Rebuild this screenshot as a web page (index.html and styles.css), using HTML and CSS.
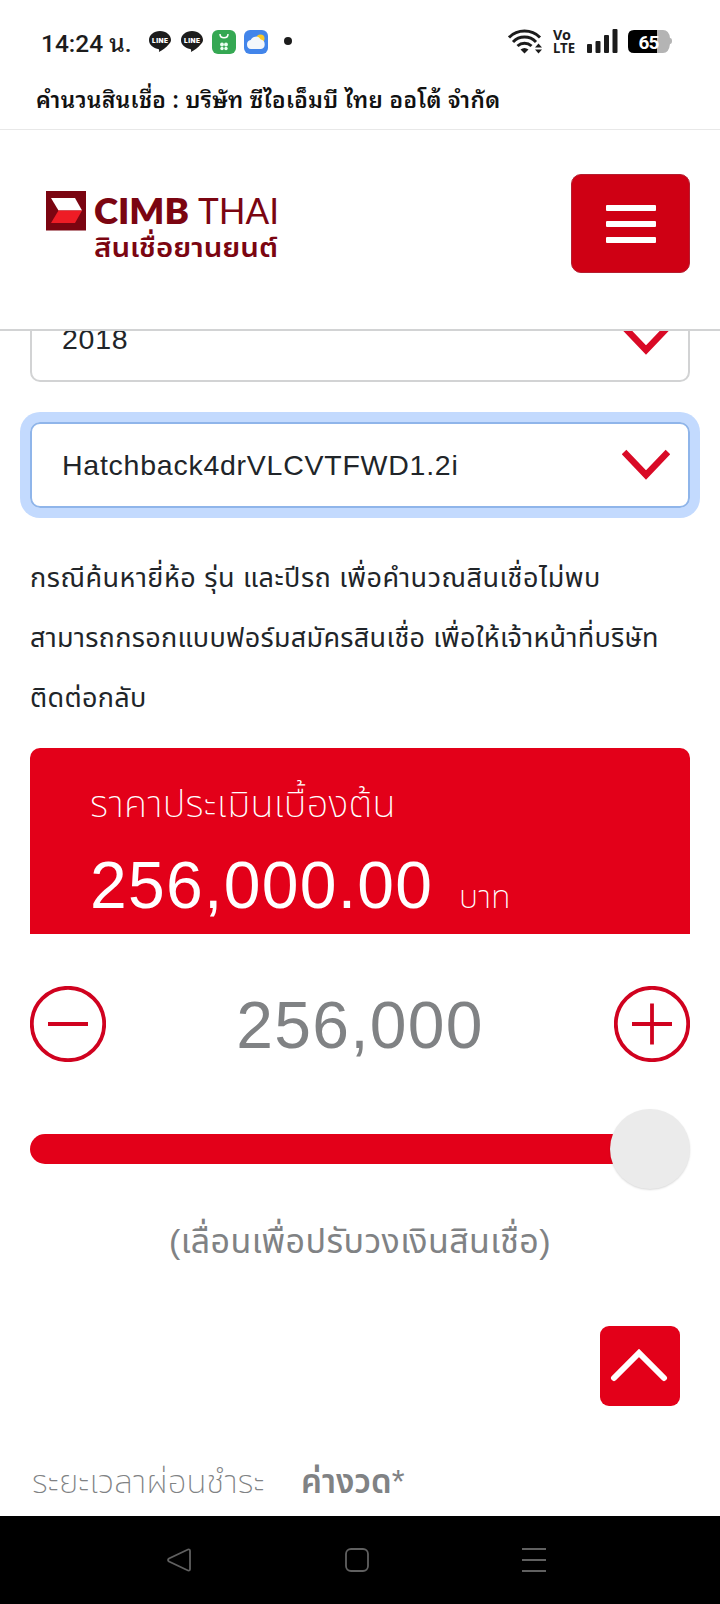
FILE: index.html
```
<!DOCTYPE html>
<html lang="th">
<head>
    <meta charset="UTF-8">
    <title>คำนวนสินเชื่อ : บริษัท ซีไอเอ็มบี ไทย ออโต้ จำกัด</title>
    <link rel="stylesheet" href="styles.css">
</head>
<body>

    <!-- Status bar -->
    <div class="status-bar">
        <span class="clock">14:24 น.</span>
        <svg class="notifications" width="150" height="32" viewBox="0 0 150 32">
            <g class="line-icon">
                <path d="M12 6C5.800 6 1 10 1 15c0 4.500 3.700 8 9 8.900 1.500.3 1.200 1.100.9 3.100 3.500-1.600 7.300-4.600 9.700-7.500C22.300 17.800 23 16.500 23 15c0-5-4.800-9-11-9z"/>
                <text x="4" y="17.500" textLength="16">LINE</text>
            </g>
            <g class="line-icon" transform="translate(32 0)">
                <path d="M12 6C5.800 6 1 10 1 15c0 4.500 3.700 8 9 8.900 1.500.3 1.200 1.100.9 3.100 3.500-1.600 7.300-4.600 9.700-7.500C22.300 17.800 23 16.500 23 15c0-5-4.800-9-11-9z"/>
                <text x="4" y="17.500" textLength="16">LINE</text>
            </g>
            <rect x="64" y="5" width="24" height="24" rx="6" fill="#35a853"/>
            <path d="M72 9c0 5 8 5 8 0" fill="none" stroke="#fff" stroke-width="1.500"/>
            <g fill="#e9fff0">
                <circle cx="74" cy="19.500" r="1.900"/><circle cx="78" cy="19.500" r="1.900"/>
                <circle cx="74" cy="23.500" r="1.700"/><circle cx="78" cy="23.500" r="1.700"/>
            </g>
            <rect x="96" y="5" width="24" height="24" rx="6" fill="#4285ea"/>
            <circle cx="112.500" cy="13.500" r="4" fill="#f9c928"/>
            <path d="M103 24a4.500 4.500 0 0 1-.3-8.900 5.500 5.500 0 0 1 10-.5 4.800 4.800 0 0 1 .3 9.400z" fill="#f4f7fb"/>
            <circle cx="140" cy="16" r="4" fill="#1c1c1c"/>
        </svg>
        <svg class="signals" width="166" height="32" viewBox="0 0 166 32">
            <g fill="none" stroke="#1c1c1c" stroke-width="3">
                <path d="M1 12.500a22 22 0 0 1 31 0"/>
                <path d="M5 17a16 16 0 0 1 23 0"/>
                <path d="M9.500 21a10.500 10.500 0 0 1 14 0"/>
            </g>
            <path d="M12.500 24.500q4-3 8 0l-4 4z" fill="#1c1c1c"/>
            <path d="M27 22.500l3.500-4 3.500 4zM27 24.500l3.500 4 3.500-4z" fill="#1c1c1c"/>
            <text class="volte" x="45" y="14.500" textLength="18" lengthAdjust="spacingAndGlyphs">Vo</text>
            <text class="volte" x="45" y="28" textLength="22" lengthAdjust="spacingAndGlyphs">LTE</text>
            <g fill="#1c1c1c">
                <rect x="79" y="19" width="5" height="9" rx="1"/>
                <rect x="87.500" y="16" width="5" height="12" rx="1"/>
                <rect x="96" y="10" width="5" height="18" rx="1"/>
                <rect x="104.500" y="4" width="5" height="24" rx="1"/>
            </g>
            <path d="M149 5h6q6 0 7 8 2 0 2 3t-2 3q-1 9-7 9h-6z" fill="#b4b4b4"/>
            <path d="M126 5h23v23h-23q-6 0-6-6V11q0-6 6-6z"/>
            <text class="battery" x="130.500" y="23.500" textLength="21">65</text>
        </svg>
    </div>

    <div class="page-title">คำนวนสินเชื่อ : บริษัท ซีไอเอ็มบี ไทย ออโต้ จำกัด</div>

    <!-- Site header -->
    <header class="site-header">
        <svg class="logo" width="240" height="80" viewBox="0 0 240 80">
            <rect width="40" height="39.500" fill="#7b0511"/>
            <path d="M5 7h24l7 12.500H12.500z" fill="#fff"/>
            <path d="M12.500 19.500H36L29 32H5z" fill="#ee1c25"/>
            <text class="logo-bold" x="48" y="32.500" textLength="95" lengthAdjust="spacingAndGlyphs">CIMB</text>
            <text class="logo-light" x="152" y="32.500" textLength="81" lengthAdjust="spacingAndGlyphs">THAI</text>
            <text class="logo-thai" x="48" y="66" textLength="184" lengthAdjust="spacingAndGlyphs">สินเชื่อยานยนต์</text>
        </svg>
        <button class="menu-button" aria-label="เมนู">
            <span></span>
            <span></span>
            <span></span>
        </button>
    </header>

    <main class="content">
        <div class="select">
            <span>2018</span>
            <svg width="48" height="32" viewBox="0 0 48 32"><path d="M2 3l22 23L46 3"/></svg>
        </div>
        <div class="select focused">
            <span>Hatchback4drVLCVTFWD1.2i</span>
            <svg width="48" height="32" viewBox="0 0 48 32"><path d="M2 3l22 23L46 3"/></svg>
        </div>

        <p class="note">
            <span class="note-lead">กรณีค้นหายี่ห้อ รุ่น และปีรถ เพื่อคำนวณสินเชื่อไม่พบ</span><br>
            สามารถกรอกแบบฟอร์มสมัครสินเชื่อ เพื่อให้เจ้าหน้าที่บริษัท<br>
            ติดต่อกลับ
        </p>

        <section class="price">
            <div class="price-label">ราคาประเมินเบื้องต้น</div>
            <div class="price-row">
                <span class="price-value">256,000.00</span>
                <span class="price-unit">บาท</span>
            </div>
        </section>

        <div class="stepper">
            <svg width="76" height="76" viewBox="0 0 76 76"><circle cx="38" cy="38" r="36.200"/><path d="M18 38h40"/></svg>
            <span class="amount">256,000</span>
            <svg width="76" height="76" viewBox="0 0 76 76"><circle cx="38" cy="38" r="36.200"/><path d="M18 38h40M38 17.500v41"/></svg>
        </div>

        <div class="slider">
            <div class="track"></div>
            <div class="thumb"></div>
        </div>
        <p class="hint">(เลื่อนเพื่อปรับวงเงินสินเชื่อ)</p>

        <button class="to-top" aria-label="กลับขึ้นด้านบน">
            <svg width="60" height="36" viewBox="0 0 60 36"><path d="M4 30L29 5l25 25"/></svg>
        </button>

        <div class="plan-head">
            <span class="plan-term">ระยะเวลาผ่อนชำระ</span>
            <span class="plan-pay">ค่างวด<span class="star">*</span></span>
        </div>
    </main>

    <!-- Android navigation -->
    <nav class="nav-bar">
        <svg width="26" height="26" viewBox="0 0 26 26"><path d="M22 2.500L3 11.500q-2 1.500 0 3L22 23.500q2 .5 2-1.500V4q0-2-2-1.500z"/></svg>
        <svg width="26" height="26" viewBox="0 0 26 26"><rect x="2" y="2" width="22" height="22" rx="5"/></svg>
        <svg width="26" height="26" viewBox="0 0 26 26"><path d="M1 2h24M1 13h24M1 24h24"/></svg>
    </nav>

</body>
</html>
```
FILE: styles.css
```
:root {
    --red: #e30019;
    --red-dark: #cf0014;
    --red-line: #d0021f;
    --text-color: #212529;
    --grey: #808284;
    --border: #d2d3d4;
}

* {
    box-sizing: border-box;
}

body {
    margin: 0;
    width: 720px;
    height: 1604px;
    display: flex;
    flex-direction: column;
    overflow: hidden;
    background-color: #fff;
    color: var(--text-color);
    font-family: "Liberation Sans", "Noto Sans Thai", "Noto Sans", sans-serif;
}

button {
    border: none;
    padding: 0;
}

/* Status bar */
.status-bar {
    height: 72px;
    padding: 25px 46px 0 41px;
    display: flex;
    flex-shrink: 0;
}

.clock {
    width: 107px;
    font: 500 24.5px/38px Roboto, "Noto Sans Thai Looped", "Noto Sans Thai", sans-serif;
    white-space: nowrap;
    color: #1c1c1c;
}

.signals {
    margin-left: auto;
    overflow: visible;
}

.line-icon path {
    fill: #1c1c1c;
}

.line-icon text {
    font: 900 6.5px Inter, sans-serif;
    fill: #fff;
}

.volte {
    font: 700 15px "Noto Sans", sans-serif;
    fill: #1c1c1c;
}

.battery {
    font: 700 19px Roboto, sans-serif;
    fill: #fff;
}

.page-title {
    height: 58px;
    padding-left: 36px;
    flex-shrink: 0;
    border-bottom: 1px solid #e8e8e8;
    font-family: "Noto Sans Thai Looped", "Noto Sans Thai", sans-serif;
    font-size: 22.5px;
    font-weight: 600;
    line-height: 52px;
    letter-spacing: 0.4px;
    white-space: nowrap;
    color: #111;
}

/* Site header */
.site-header {
    height: 201px;
    padding: 0 30px 0 46px;
    display: flex;
    flex-shrink: 0;
    justify-content: space-between;
    border-bottom: 2px solid var(--border);
}

.logo {
    margin-top: 61px;
    overflow: visible;
    fill: #7b0511;
}

.logo-bold {
    font: 800 36px Lato, sans-serif;
}

.logo-light {
    font: 400 36px Lato, sans-serif;
}

.logo-thai {
    font: 600 27px "Noto Sans Thai", sans-serif;
}

.menu-button {
    width: 119px;
    height: 99px;
    margin-top: 44px;
    display: flex;
    flex-direction: column;
    align-items: center;
    justify-content: center;
    gap: 10px;
    border: 1px solid #b51e30;
    border-radius: 10px;
    background-color: var(--red-dark);
}

.menu-button span {
    width: 50px;
    height: 6px;
    border-radius: 1px;
    background-color: #fff;
}

/* Scrolled page content */
.content {
    flex: 1;
    min-height: 0;
    padding: 0 30px;
    overflow: hidden;
}

.select {
    height: 86px;
    margin-top: -35px;
    padding: 1px 18px 0 30px;
    display: flex;
    align-items: center;
    justify-content: space-between;
    border: 2px solid var(--border);
    border-radius: 10px;
    font-size: 28.5px;
    letter-spacing: 0.75px;
}

.select.focused {
    margin-top: 40px;
    padding-top: 0;
    border-color: #8fb5ea;
    box-shadow: 0 0 0 10px #c3dafe;
}

.select path {
    fill: none;
    stroke: #d90a26;
    stroke-width: 6.5;
}

.note {
    margin: 40px 0 0;
    font-size: 27px;
    font-weight: 400;
    line-height: 60px;
    letter-spacing: 0.3px;
    white-space: nowrap;
}

.note-lead {
    letter-spacing: 0.5px;
}

.price {
    height: 186px;
    margin-top: 20px;
    padding: 20px 60px 0;
    border-radius: 10px 10px 0 0;
    background-color: var(--red);
    color: #fff;
}

.price-label {
    height: 72px;
    font-size: 38px;
    font-weight: 200;
    line-height: 72px;
    letter-spacing: 0.2px;
    white-space: nowrap;
}

.price-row {
    display: flex;
    align-items: baseline;
    line-height: 90px;
}

.price-value {
    width: 369px;
    font-size: 66px;
    letter-spacing: 1.3px;
}

.price-unit {
    font-size: 32px;
    font-weight: 200;
}

.stepper {
    height: 76px;
    margin-top: 52px;
    display: flex;
    align-items: center;
    justify-content: space-between;
}

.stepper svg {
    fill: none;
    stroke: var(--red-line);
    stroke-width: 3.800;
}

.amount {
    padding-top: 2px;
    font-size: 66px;
    letter-spacing: 1.3px;
    color: var(--grey);
}

.slider {
    height: 80px;
    margin-top: 47px;
    display: flex;
    align-items: center;
}

.track {
    width: 620px;
    height: 30px;
    border-radius: 15px 0 0 15px;
    background-color: var(--red);
}

.thumb {
    width: 80px;
    height: 80px;
    margin-left: -40px;
    border-radius: 50%;
    background-color: #ebebeb;
    box-shadow: 0 1px 2px rgba(0, 0, 0, 0.15);
}

.hint {
    margin: 22px 0 0;
    font-size: 34px;
    line-height: 60px;
    letter-spacing: 0.4px;
    text-align: center;
    white-space: nowrap;
    color: var(--grey);
}

.to-top {
    width: 80px;
    height: 80px;
    margin: 55px 10px 0 auto;
    display: flex;
    align-items: center;
    justify-content: center;
    border-radius: 9px;
    background-color: var(--red);
}

.to-top path {
    fill: none;
    stroke: #fff;
    stroke-width: 6;
    stroke-linecap: round;
}

.plan-head {
    margin-top: 46px;
    padding-left: 2px;
    display: flex;
    font-size: 33px;
    line-height: 60px;
    white-space: nowrap;
    color: var(--grey);
}

.plan-term {
    width: 269px;
    font-weight: 200;
    letter-spacing: 0.1px;
}

.plan-pay {
    font-weight: 600;
}

.star {
    font-weight: normal;
}

/* Android navigation */
.nav-bar {
    height: 88px;
    padding: 0 173px 0 166px;
    display: flex;
    flex-shrink: 0;
    align-items: center;
    justify-content: space-between;
    background-color: #000;
}

.nav-bar svg {
    fill: none;
    stroke: #606060;
    stroke-width: 1.800;
}
```
